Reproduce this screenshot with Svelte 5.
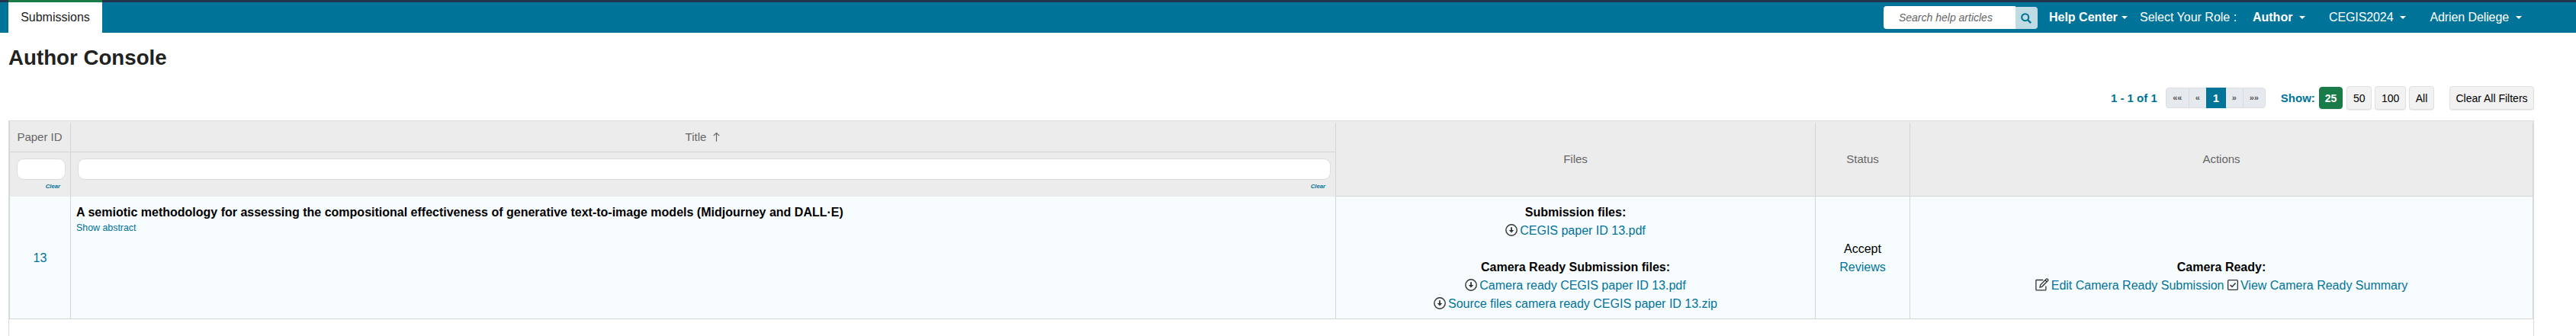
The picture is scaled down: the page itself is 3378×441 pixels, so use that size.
<script>
  const userMenus = ['CEGIS2024', 'Adrien Deliege'];
  const pageSizes = ['25', '50', '100', 'All'];

  const papers = [
    {
      id: 13,
      title: 'A semiotic methodology for assessing the compositional effectiveness of generative text-to-image models (Midjourney and DALL·E)',
      submissionFiles: ['CEGIS paper ID 13.pdf'],
      cameraReadyFiles: [
        'Camera ready CEGIS paper ID 13.pdf',
        'Source files camera ready CEGIS paper ID 13.zip'
      ],
      status: 'Accept'
    }
  ];

  let pageSize = $state('25');
  let search = $state('');
  let idFilter = $state('');
  let titleFilter = $state('');

  function clearAll() {
    idFilter = '';
    titleFilter = '';
  }
</script>

{#snippet fileLink(name)}
  <div class="file">
    <svg class="icon download" viewBox="0 0 16 16">
      <circle cx="8" cy="8" r="7.2" fill="none" stroke="#333" stroke-width="1.4" />
      <path d="M8 4.2v5" stroke="#333" stroke-width="1.8" />
      <path d="M4.8 7.9h6.4L8 11.6z" fill="#333" />
    </svg><a href="#file">{name}</a>
  </div>
{/snippet}

<nav class="navbar">
  <a class="tab" href="#submissions">Submissions</a>
  <div class="nav-right">
    <div class="search">
      <input type="text" placeholder="Search help articles" bind:value={search} />
      <button class="search-btn" aria-label="Search">
        <svg viewBox="0 0 14 14" width="14" height="14">
          <circle cx="5.7" cy="5.7" r="4.5" fill="none" stroke="#007398" stroke-width="2.1" />
          <path d="M9 9l4.1 4.1" stroke="#007398" stroke-width="2.4" />
        </svg>
      </button>
    </div>
    <span class="menu help"><b>Help Center</b><i class="caret"></i></span>
    <span class="role-label">Select Your Role :</span>
    <span class="menu role"><b>Author</b><i class="caret"></i></span>
    {#each userMenus as menu}
      <span class="menu user">{menu}<i class="caret"></i></span>
    {/each}
  </div>
</nav>

<main>
  <h1>Author Console</h1>

  <div class="toolbar">
    <span class="count">1 - 1 of 1</span>
    <div class="pager">
      <span class="end">««</span>
      <span>«</span>
      <span class="active">1</span>
      <span>»</span>
      <span class="end">»»</span>
    </div>
    <span class="show">Show:</span>
    <div class="sizes">
      {#each pageSizes as size}
        <button class="btn" class:selected={pageSize === size} onclick={() => (pageSize = size)}>{size}</button>
      {/each}
    </div>
    <button class="btn clear-all" onclick={clearAll}>Clear All Filters</button>
  </div>

  <div class="table">
    <div class="row head">
      <div class="cell filterable">
        <div class="label">Paper ID</div>
        <div class="filter">
          <input type="text" aria-label="Paper ID" bind:value={idFilter} />
          <a href="#clear">Clear</a>
        </div>
      </div>
      <div class="cell filterable">
        <div class="label">
          Title
          <svg class="sort" viewBox="0 0 10 14">
            <path d="M5 13.5V1M.8 5L5 .9L9.2 5" fill="none" stroke="#666" stroke-width="1.3" />
          </svg>
        </div>
        <div class="filter">
          <input type="text" aria-label="Title" bind:value={titleFilter} />
          <a href="#clear">Clear</a>
        </div>
      </div>
      <div class="cell plain">Files</div>
      <div class="cell plain">Status</div>
      <div class="cell plain">Actions</div>
    </div>

    {#each papers as paper (paper.id)}
      <div class="row body">
        <div class="cell middle"><a href="#paper">{paper.id}</a></div>
        <div class="cell title">
          <b>{paper.title}</b>
          <a href="#abstract">Show abstract</a>
        </div>
        <div class="cell files">
          <b>Submission files:</b>
          {#each paper.submissionFiles as file}
            {@render fileLink(file)}
          {/each}
          <b class="spaced">Camera Ready Submission files:</b>
          {#each paper.cameraReadyFiles as file}
            {@render fileLink(file)}
          {/each}
        </div>
        <div class="cell middle">
          <span>{paper.status}</span>
          <a href="#reviews">Reviews</a>
        </div>
        <div class="cell actions">
          <b>Camera Ready:</b>
          <div class="action-links">
            <svg class="icon edit" viewBox="0 0 18 17">
              <path d="M10.3 2.5H1.6Q.9 2.5 .9 3.2V15.2Q.9 15.9 1.6 15.9H13.2Q13.9 15.9 13.9 15.2V10.5" fill="none" stroke="#333" stroke-width="1.3" />
              <path d="M6 12.1L6.6 9.1L14.3 1.3Q15.3 .5 16.3 1.5Q17.3 2.5 16.4 3.5L8.7 11.3ZM13 2.7L15.1 4.8" fill="none" stroke="#333" stroke-width="1.3" />
            </svg><a href="#edit">Edit Camera Ready Submission</a>
            <svg class="icon check" viewBox="0 0 14 14">
              <rect x=".65" y=".65" width="12.7" height="12.7" rx="1" fill="none" stroke="#333" stroke-width="1.3" />
              <path d="M3.6 7L6 9.4L10.5 4.4" fill="none" stroke="#333" stroke-width="1.5" />
            </svg><a href="#view">View Camera Ready Summary</a>
          </div>
        </div>
      </div>
    {/each}
  </div>
</main>

<style>
  :global(body) {
    background: #fff;
    color: #000;
    font: 16px/24px "Liberation Sans", Arial, sans-serif;
  }

  :global(#app) {
    height: 441px;
    display: flex;
    flex-direction: column;
    overflow: hidden;
  }

  a {
    color: #007398;
    text-decoration: none;
  }

  input,
  button {
    box-sizing: border-box;
    font-family: inherit;
    margin: 0;
  }

  .navbar {
    box-sizing: border-box;
    height: 43px;
    flex: none;
    display: flex;
    justify-content: space-between;
    align-items: flex-start;
    padding: 0 71px 0 11px;
    background: linear-gradient(#22344c 3px, #007398 3px);
  }

  .tab {
    box-sizing: border-box;
    width: 123px;
    height: 43px;
    padding-top: 8px;
    border-top: 3px solid #197b47;
    background: #fff;
    color: #222;
    text-align: center;
  }

  .nav-right {
    display: flex;
    align-items: center;
    height: 24px;
    padding-top: 11px;
    color: #fff;
  }

  .search {
    display: flex;
    align-items: center;
    width: 202px;
    margin-right: 15px;
  }

  .search input {
    width: 173px;
    height: 30px;
    padding: 0 20px;
    border: 0;
    border-radius: 4px 0 0 4px;
    font-size: 14px;
    font-style: italic;
  }

  .search input::placeholder {
    color: #666;
    opacity: 1;
  }

  .search-btn {
    display: flex;
    align-items: center;
    justify-content: center;
    width: 29px;
    height: 29px;
    margin-top: 1px;
    padding: 0;
    border: 0;
    border-radius: 0 4px 4px 0;
    background: #bfdce5;
  }

  .menu {
    display: flex;
    align-items: center;
    white-space: nowrap;
  }

  .caret {
    border: 4px solid transparent;
    border-top-color: #fff;
    border-bottom: 0;
    margin-left: 9px;
  }

  .help {
    width: 104px;
    margin-right: 15px;
  }

  .help .caret {
    margin-left: 5px;
  }

  .role-label {
    width: 148px;
    white-space: nowrap;
  }

  .role {
    width: 69px;
  }

  .user {
    margin-left: 31px;
    letter-spacing: -0.1px;
  }

  .role,
  .role-label {
    flex: none;
  }

  main {
    flex: 1;
    display: flex;
    flex-direction: column;
    margin: 0 55px 0 11px;
  }

  h1 {
    margin: 17px 0 0;
    color: #222;
    font-size: 27.7px;
    line-height: 32px;
  }

  .toolbar {
    display: flex;
    align-items: center;
    justify-content: flex-end;
    height: 31px;
    margin: 21px 0 14px;
    font-size: 14px;
  }

  .count,
  .show {
    color: #007398;
    font-size: 15px;
    font-weight: bold;
  }

  .pager {
    box-sizing: border-box;
    display: flex;
    width: 131px;
    height: 27px;
    margin: 0 20px 0 11px;
    border: 1px solid #dbdfe4;
    border-radius: 4px;
    background: #e6e9ee;
    color: #555;
  }

  .pager span {
    width: 22px;
    line-height: 25px;
    font-size: 11px;
    font-weight: bold;
    text-align: center;
  }

  .pager .end {
    width: 29px;
  }

  .pager .end:first-child {
    border-right: 1px solid #d5dade;
  }

  .pager .end:last-child {
    border-left: 1px solid #d5dade;
    width: 28px;
  }

  .pager .active {
    width: 26px;
    margin: -1px 0;
    line-height: 28px;
    background: #007398;
    color: #fff;
    font-size: 15px;
  }

  .sizes {
    display: flex;
    gap: 4px;
    margin: 0 20px 0 5px;
  }

  .btn {
    height: 31px;
    padding: 0 7.7px;
    border: 1px solid #e0e0e0;
    border-radius: 4px;
    background: #f2f2f2;
    box-shadow: 0 1px 1px rgba(0, 0, 0, 0.08);
    color: #000;
    font-size: 14px;
  }

  .btn.selected {
    height: 29px;
    margin: 1px 1px 0 0;
    padding: 0 7px;
    border-color: #197b47;
    background: #197b47;
    color: #fff;
    font-weight: bold;
  }

  .clear-all {
    width: 111px;
    padding: 0;
  }

  .table {
    flex: 1;
    display: flex;
    flex-direction: column;
    border: 1px solid #d8dde0;
    border-bottom: 0;
  }

  .row {
    display: grid;
    grid-template-columns: 80px 1659px 629px 124px 1fr;
    border-left: 1px solid #d5d5d5;
  }

  .cell {
    box-sizing: border-box;
    border-right: 1px solid #d5d5d5;
    border-bottom: 1px solid #d5d5d5;
  }

  .head {
    height: 97px;
    padding-top: 2px;
    background: #ececec;
    color: #666;
    font-size: 15px;
  }

  .plain {
    display: flex;
    align-items: center;
    justify-content: center;
    padding-bottom: 1px;
  }

  .filterable {
    border-bottom-color: #e9eaec;
  }

  .label {
    box-sizing: border-box;
    display: flex;
    align-items: center;
    justify-content: center;
    height: 39px;
    padding-right: 1px;
    border-bottom: 1px solid #d5d5d5;
  }

  .sort {
    width: 9px;
    height: 14px;
    margin-left: 9px;
  }

  .filter {
    display: flex;
    flex-direction: column;
    padding: 8px 6px 0 9px;
  }

  .filter input {
    width: 100%;
    height: 28px;
    border: 1px solid #d8dde0;
    border-radius: 9px;
    background: #fff;
  }

  .filter a {
    align-self: flex-end;
    margin-right: 7px;
    font-size: 7.7px;
    font-style: italic;
    font-weight: bold;
    line-height: 17px;
  }

  .body {
    height: 161px;
    background: #f7fcff;
  }

  .middle {
    display: flex;
    flex-direction: column;
    align-items: center;
    justify-content: center;
    padding-top: 1px;
  }

  .title {
    display: flex;
    flex-direction: column;
    padding: 9px 7px 0;
  }

  .title a {
    margin-top: -1px;
    font-size: 12.4px;
    line-height: 18px;
  }

  .files {
    padding-top: 9px;
    text-align: center;
  }

  .files b {
    display: block;
  }

  .spaced {
    margin-top: 24px;
  }

  .icon {
    display: inline-block;
    vertical-align: -2px;
  }

  .download {
    width: 16px;
    height: 16px;
    margin-right: 3px;
  }

  .actions {
    padding-top: 81px;
    text-align: center;
  }

  .edit {
    width: 18px;
    height: 17px;
    margin-right: 3px;
  }

  .check {
    width: 14px;
    height: 14px;
    margin-right: 3px;
    vertical-align: -1px;
  }
</style>
